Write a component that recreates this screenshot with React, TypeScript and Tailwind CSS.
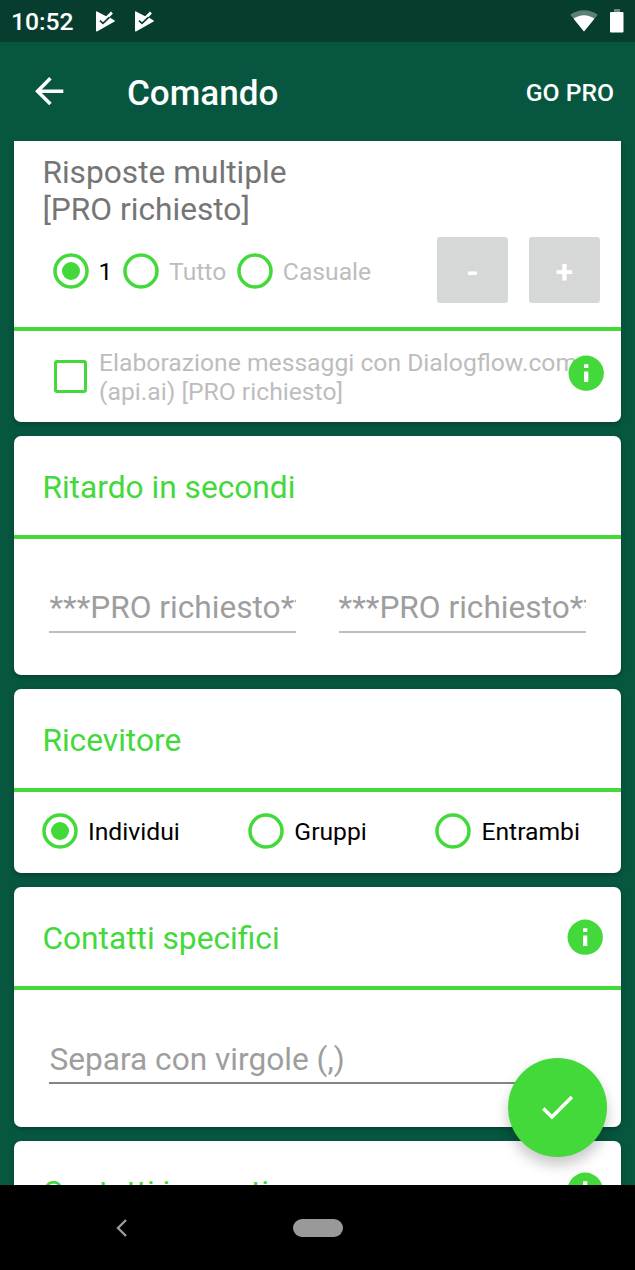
import { ReactNode } from "react";
import clsx from "clsx";

type RadioProps = {
  label: string;
  checked?: boolean;
  disabled?: boolean;
};

function Radio({ label, checked, disabled }: RadioProps) {
  return (
    <div className="flex items-center">
      <svg className="size-9 shrink-0" viewBox="0 0 36 36">
        <circle cx="18" cy="18" r="16" fill="none" stroke="#43d93a" strokeWidth="3.5" />
        {checked && <circle cx="18" cy="18" r="9" fill="#43d93a" />}
      </svg>
      <span
        className={clsx(
          "ml-[10px] pt-[2px] text-[24.7px] leading-[29px]",
          disabled ? "text-[#bdbdbd]" : "text-black"
        )}
      >
        {label}
      </span>
    </div>
  );
}

function InfoIcon() {
  return (
    <svg className="size-[42.4px] shrink-0" viewBox="0 0 24 24">
      <circle cx="12" cy="12" r="10" fill="#43d93a" />
      <path fill="#fff" d="M10.8 11h2.4v6h-2.4zM10.8 7h2.4v2.1h-2.4z" />
    </svg>
  );
}

function PlayCheckIcon() {
  return (
    <svg className="h-[21px] w-5" viewBox="0 0 20 21">
      <path
        fill="#fff"
        d="M2 .4 11.2 5.2 16 .6 17.9 2.5 14.4 6.2 19.6 9.6Q20.1 10.1 19.6 10.6L2 20.4Q1 20.7 1 19.7V1.2Q1 .1 2 .4z"
      />
      <path d="M5 9.6 8 12.4 14.6 6.2" fill="none" stroke="#063d2f" strokeWidth="1.7" />
    </svg>
  );
}

function CardHeader({ title, info }: { title: string; info?: boolean }) {
  return (
    <div className="flex h-[103px] items-center justify-between border-b-4 border-[#43d93a] pt-1 pr-[14.2px] pl-[28.4px]">
      <h2 className="text-[31.7px] leading-[37px] text-[#43d93a]">{title}</h2>
      {info && (
        <div className="-mt-[3px]">
          <InfoIcon />
        </div>
      )}
    </div>
  );
}

function Card({ className, children }: { className: string; children: ReactNode }) {
  return (
    <section
      className={clsx(
        "shrink-0 overflow-hidden bg-white shadow-[0_2px_4px_rgba(0,0,0,0.25)]",
        className
      )}
    >
      {children}
    </section>
  );
}

function ProField() {
  return (
    <div className="h-[44px] w-[247px] overflow-hidden border-b-2 border-[#bdbdbd] text-[31.65px] leading-[37px] whitespace-nowrap text-[#9e9e9e]">
      ***PRO richiesto***
    </div>
  );
}

export default function App() {
  return (
    <div className="relative flex h-[1270px] w-[635px] flex-col overflow-hidden bg-[#075640] font-['Roboto',sans-serif]">
      <div className="flex h-[42px] shrink-0 items-center bg-[#063d2f] pr-[11px] pl-[11px] text-white">
        <span className="w-[84px] pt-px text-[24.7px] leading-[29px] font-medium">10:52</span>
        <div className="flex gap-[19px]">
          <PlayCheckIcon />
          <PlayCheckIcon />
        </div>
        <svg className="ml-auto h-[22px] w-7" viewBox="0 0 28 22">
          <path d="M14 21.5.3 4.8C8-1.3 20-1.3 27.7 4.8z" fill="#fff" opacity=".35" />
          <path d="M14 21.5 3.6 8.8C9.8 4 18.2 4 24.4 8.8z" fill="#fff" />
        </svg>
        <svg className="ml-3 h-6 w-[14px]" viewBox="0 0 14 24">
          <path d="M4 0h6v3.5H4z" fill="#fff" opacity=".4" />
          <rect y="3" width="13.5" height="20.5" rx="1" fill="#fff" />
        </svg>
      </div>

      <header className="flex h-[99px] shrink-0 items-center pr-[21px] pl-7 text-white">
        <svg className="size-[42.4px]" viewBox="0 0 24 24">
          <path
            fill="#fff"
            d="M20 11H7.83l5.59-5.59L12 4l-8 8 8 8 1.41-1.41L7.83 13H20v-2z"
          />
        </svg>
        <h1 className="ml-[56.5px] pt-[2px] text-[35.1px] leading-[42px] font-medium">Comando</h1>
        <span className="ml-auto pt-[2px] text-[24.7px] leading-[29px] font-medium">GO PRO</span>
      </header>

      <main className="flex min-h-0 flex-1 flex-col gap-[14px] overflow-hidden px-[14px]">
        <Card className="h-[280.5px] rounded-b-[7px]">
          <div className="h-[190px] border-b-4 border-[#43d93a] pt-[13px]">
            <h2 className="pl-[28.4px] text-[31.7px] leading-[37px] text-[#757575]">
              Risposte multiple
              <br />
              [PRO richiesto]
            </h2>
            <div className="mt-[9px] flex items-center pr-[21px] pl-[38.6px]">
              <div className="flex gap-[10.6px] pt-px">
                <Radio label="1" checked />
                <Radio label="Tutto" disabled />
                <Radio label="Casuale" disabled />
              </div>
              <div className="ml-auto flex gap-[21px]">
                <button className="h-[66px] w-[71px] rounded-[3px] bg-[#d6d7d7] pt-[5px] text-[31.75px] font-bold text-white">
                  -
                </button>
                <button className="h-[66px] w-[71px] rounded-[3px] bg-[#d6d7d7] pt-[5px] text-[31.75px] font-bold text-white">
                  +
                </button>
              </div>
            </div>
          </div>
          <div className="flex h-[90px] items-center pl-[40px]">
            <div className="size-[33px] shrink-0 rounded-[3px] border-[3.5px] border-[#43d93a]" />
            <p className="ml-3 w-[465.6px] shrink-0 pt-[2px] text-[24.7px] leading-[29px] whitespace-nowrap text-[#bdbdbd]">
              Elaborazione messaggi con Dialogflow.com
              <br />
              (api.ai) [PRO richiesto]
            </p>
            <div className="-mt-[5px]">
              <InfoIcon />
            </div>
          </div>
        </Card>

        <Card className="h-[239px] rounded-[7px]">
          <CardHeader title="Ritardo in secondi" />
          <div className="flex justify-between pt-[50px] pr-[35.5px] pl-[35.4px]">
            <ProField />
            <ProField />
          </div>
        </Card>

        <Card className="h-[184.5px] rounded-[7px]">
          <CardHeader title="Ricevitore" />
          <div className="flex justify-between pt-[21px] pr-[41px] pl-7">
            <Radio label="Individui" checked />
            <Radio label="Gruppi" />
            <Radio label="Entrambi" />
          </div>
        </Card>

        <Card className="h-[239.5px] rounded-[7px]">
          <CardHeader title="Contatti specifici" info />
          <div className="pt-[51px] pr-[35.5px] pl-[35.4px]">
            <div className="h-[43px] border-b-2 border-[#858585] text-[31.65px] leading-[37px] text-[#9e9e9e]">
              Separa con virgole (,)
            </div>
          </div>
        </Card>

        <Card className="h-[240px] rounded-[7px]">
          <CardHeader title="Contatti ignorati" info />
        </Card>
      </main>

      <nav className="flex h-[85px] shrink-0 items-center bg-black pl-[115px]">
        <svg className="h-[18px] w-[13px]" viewBox="0 0 13 18">
          <path d="M11 1 3 9l8 8" fill="none" stroke="#9b9b9b" strokeWidth="2.4" />
        </svg>
        <div className="ml-[165px] h-[18px] w-[50px] rounded-full bg-[#999]" />
      </nav>

      <button className="absolute top-[1058px] left-[508px] flex size-[99px] items-center justify-center rounded-full bg-[#43d93a] shadow-[0_8px_14px_rgba(0,0,0,0.22)]">
        <svg className="size-[42.4px]" viewBox="0 0 24 24">
          <path fill="#fff" d="M9 16.17 4.83 12l-1.42 1.41L9 19 21 7l-1.41-1.41z" />
        </svg>
      </button>
    </div>
  );
}
